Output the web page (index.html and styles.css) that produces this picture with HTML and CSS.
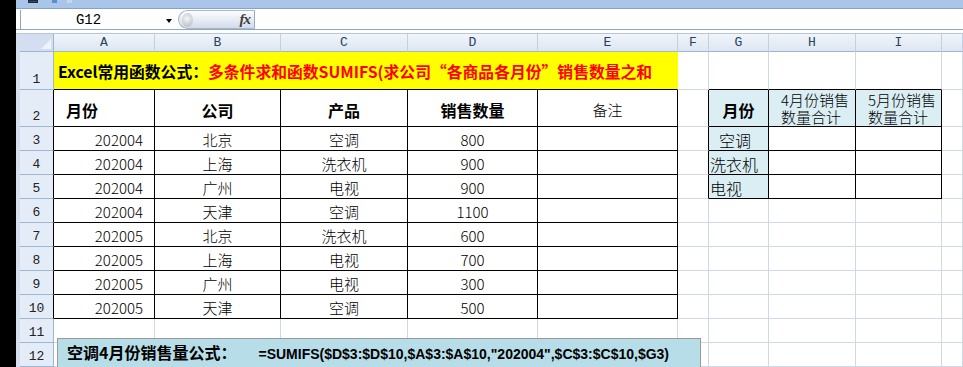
FILE: index.html
```html
<!DOCTYPE html>
<html lang="zh-CN">
<head>
    <meta charset="UTF-8">
    <title>SUMIFS</title>
    <link rel="stylesheet" href="styles.css">
</head>
<body>
    <div class="window">
        <div class="edge"></div>
        <div class="app">
            <div class="qat">
                <span class="qat-icon save"></span>
                <span class="qat-icon undo"></span>
                <span class="qat-icon redo"></span>
            </div>
            <div class="fbar">
                <div class="namebox">
                    <span class="name">G12</span>
                    <span class="arrow"></span>
                </div>
                <div class="fx-btn">
                    <span class="ball"></span>
                    <span class="fx">fx</span>
                </div>
                <div class="finput"></div>
            </div>
            <div class="band"></div>

            <div class="sheet">
                <!-- 列标 -->
                <div class="corner"><span class="tri"></span></div>
                <div class="ch">A</div>
                <div class="ch">B</div>
                <div class="ch">C</div>
                <div class="ch">D</div>
                <div class="ch">E</div>
                <div class="ch">F</div>
                <div class="ch">G</div>
                <div class="ch">H</div>
                <div class="ch">I</div>
                <div class="ch"></div>

                <!-- 1 -->
                <div class="rh">1</div>
                <div class="c title"><b>Excel常用函数公式：</b><b class="red">多条件求和函数SUMIFS(求公司“各商品各月份”销售数量之和</b></div>
                <div class="c"></div>
                <div class="c bb"></div>
                <div class="c bb"></div>
                <div class="c bb"></div>
                <div class="c"></div>

                <!-- 2 -->
                <div class="rh dark">2</div>
                <div class="c b head left">月份</div>
                <div class="c b head">公司</div>
                <div class="c b head">产品</div>
                <div class="c b head">销售数量</div>
                <div class="c b note">备注</div>
                <div class="c br"></div>
                <div class="c b fill head">月份</div>
                <div class="c b fill wrap"><span class="ln">4月份销售</span><span class="ln">数量合计</span></div>
                <div class="c b fill wrap"><span class="ln">5月份销售</span><span class="ln">数量合计</span></div>
                <div class="c"></div>

                <!-- 3 -->
                <div class="rh dark">3</div>
                <div class="c b num">202004</div>
                <div class="c b">北京</div>
                <div class="c b">空调</div>
                <div class="c b">800</div>
                <div class="c b"></div>
                <div class="c br"></div>
                <div class="c b fill item indent">空调</div>
                <div class="c b"></div>
                <div class="c b"></div>
                <div class="c"></div>

                <!-- 4 -->
                <div class="rh dark">4</div>
                <div class="c b num">202004</div>
                <div class="c b">上海</div>
                <div class="c b">洗衣机</div>
                <div class="c b">900</div>
                <div class="c b"></div>
                <div class="c br"></div>
                <div class="c b fill item">洗衣机</div>
                <div class="c b"></div>
                <div class="c b"></div>
                <div class="c"></div>

                <!-- 5 -->
                <div class="rh dark">5</div>
                <div class="c b num">202004</div>
                <div class="c b">广州</div>
                <div class="c b">电视</div>
                <div class="c b">900</div>
                <div class="c b"></div>
                <div class="c br"></div>
                <div class="c b fill item">电视</div>
                <div class="c b"></div>
                <div class="c b"></div>
                <div class="c"></div>

                <!-- 6 -->
                <div class="rh dark">6</div>
                <div class="c b num">202004</div>
                <div class="c b">天津</div>
                <div class="c b">空调</div>
                <div class="c b">1100</div>
                <div class="c b"></div>
                <div class="c"></div>
                <div class="c"></div>
                <div class="c"></div>
                <div class="c"></div>
                <div class="c"></div>

                <!-- 7 -->
                <div class="rh dark">7</div>
                <div class="c b num">202005</div>
                <div class="c b">北京</div>
                <div class="c b">洗衣机</div>
                <div class="c b">600</div>
                <div class="c b"></div>
                <div class="c"></div>
                <div class="c"></div>
                <div class="c"></div>
                <div class="c"></div>
                <div class="c"></div>

                <!-- 8 -->
                <div class="rh dark">8</div>
                <div class="c b num">202005</div>
                <div class="c b">上海</div>
                <div class="c b">电视</div>
                <div class="c b">700</div>
                <div class="c b"></div>
                <div class="c"></div>
                <div class="c"></div>
                <div class="c"></div>
                <div class="c"></div>
                <div class="c"></div>

                <!-- 9 -->
                <div class="rh dark">9</div>
                <div class="c b num">202005</div>
                <div class="c b">广州</div>
                <div class="c b">电视</div>
                <div class="c b">300</div>
                <div class="c b"></div>
                <div class="c"></div>
                <div class="c"></div>
                <div class="c"></div>
                <div class="c"></div>
                <div class="c"></div>

                <!-- 10 -->
                <div class="rh dark">10</div>
                <div class="c b num">202005</div>
                <div class="c b">天津</div>
                <div class="c b">空调</div>
                <div class="c b">500</div>
                <div class="c b"></div>
                <div class="c"></div>
                <div class="c"></div>
                <div class="c"></div>
                <div class="c"></div>
                <div class="c"></div>

                <!-- 11 -->
                <div class="rh">11</div>
                <div class="c"></div>
                <div class="c"></div>
                <div class="c"></div>
                <div class="c"></div>
                <div class="c"></div>
                <div class="c"></div>
                <div class="c"></div>
                <div class="c"></div>
                <div class="c"></div>
                <div class="c"></div>

                <!-- 12 -->
                <div class="rh">12</div>
                <div class="c"></div>
                <div class="c"></div>
                <div class="c"></div>
                <div class="c"></div>
                <div class="c"></div>
                <div class="c"></div>
                <div class="c"></div>
                <div class="c"></div>
                <div class="c"></div>
                <div class="c"></div>

                <!-- 文本框 -->
                <div class="textbox">
                    <span class="tb-label">空调4月份销售量公式：</span><span class="tb-formula">=SUMIFS($D$3:$D$10,$A$3:$A$10,"202004",$C$3:$C$10,$G3)</span>
                </div>
            </div>
        </div>
    </div>
</body>
</html>
```

FILE: styles.css
```css
* {
    margin: 0;
    padding: 0;
    box-sizing: border-box;
}
html, body {
    width: 963px;
    height: 367px;
    overflow: hidden;
    background: #000;
}
body {
    font-family: "Noto Sans CJK SC", sans-serif;
}
.window {
    display: flex;
    height: 367px;
}
.edge {
    width: 16px;
    background: #000;
    flex-shrink: 0;
}
.app {
    flex: 1;
    background: #d5dfed;
    display: flex;
    flex-direction: column;
    overflow: hidden;
}

/* quick access strip */
.qat {
    height: 9px;
    background: #aac5ea;
    border-bottom: 1px solid #86a2c6;
    display: flex;
    gap: 10px;
    padding-left: 12px;
}
.qat-icon {
    width: 10px;
    height: 3px;
}
.qat-icon.save {
    background: #3b4d66;
    border: 1px solid #1e2a3a;
}
.qat-icon.undo {
    background: #5a8fd0;
    width: 5px;
    margin-left: 4px;
}
.qat-icon.redo {
    background: #c9d6e8;
    width: 5px;
}

/* formula bar */
.fbar {
    height: 21px;
    background: #fff;
    border-bottom: 1px solid #8ea6c6;
    padding: 1px 0 0 4px;
    display: flex;
}
.namebox {
    width: 158px;
    height: 19px;
    border-left: 1px solid #8ea6c6;
    display: flex;
    align-items: center;
    position: relative;
}
.name {
    flex: 1;
    text-align: center;
    padding-right: 22px;
    font-family: "Liberation Mono", monospace;
    font-size: 14px;
    color: #000;
}
.arrow {
    position: absolute;
    right: 6px;
    top: 9px;
    border-left: 3.5px solid transparent;
    border-right: 3.5px solid transparent;
    border-top: 4px solid #000;
}
.fx-btn {
    width: 77px;
    height: 19px;
    border: 1px solid #a7b6cb;
    border-right-color: #9aaac2;
    border-radius: 10px 0 0 10px;
    background: linear-gradient(#fbfcfe, #e6ebf3 55%, #d3dbe7);
    display: flex;
    align-items: center;
    justify-content: space-between;
    padding: 0 4px 0 3px;
}
.ball {
    width: 11px;
    height: 14px;
    border-radius: 50%;
    background: radial-gradient(circle at 45% 40%, #f4f5f7, #c2c7cf 70%, #a9b0bb);
}
.fx {
    font-family: "Liberation Serif", serif;
    font-style: italic;
    font-size: 15px;
    font-weight: bold;
    color: #3d3d3d;
    letter-spacing: -1px;
    line-height: 1;
}
.finput {
    flex: 1;
}
.band {
    height: 4px;
    background: #fff;
    border-bottom: 1px solid #b6c7dd;
}

/* sheet grid */
.sheet {
    position: relative;
    flex: 1;
    margin-left: 4px;
    background: #fff;
    display: grid;
    grid-template-columns: 34px 101px 126px 127px 130px 140px 31px 60px 87px 86px 1fr;
    grid-template-rows: 18px 38px 37px repeat(9, 24px) 1fr;
}
.corner {
    background: #d3dff0;
    border-right: 1px solid #9eb6ce;
    border-bottom: 1px solid #9eb6ce;
    position: relative;
}
.tri {
    position: absolute;
    right: 2px;
    bottom: 2px;
    border-left: 10px solid transparent;
    border-bottom: 10px solid #f0f4fa;
}
.ch {
    background: linear-gradient(#f1f5fb, #dde6f1);
    border-right: 1px solid #c2d0e2;
    border-bottom: 1px solid #9eb6ce;
    font-family: "Liberation Mono", monospace;
    font-size: 13px;
    color: #27415f;
    text-align: center;
    line-height: 17px;
}
.rh {
    background: #e4ecf7;
    border-right: 1px solid #9eb6ce;
    border-bottom: 1px solid #9eb6ce;
    font-family: "Liberation Mono", monospace;
    font-size: 13px;
    color: #222;
    display: flex;
    align-items: flex-end;
    justify-content: center;
    padding-bottom: 2px;
}
.rh.dark {
    border-right-color: #000;
}
.c {
    border-right: 1px solid #d0d7e5;
    border-bottom: 1px solid #d0d7e5;
    font-size: 15px;
    font-weight: 300;
    color: #000;
    display: flex;
    align-items: center;
    justify-content: center;
    padding-top: 2px;
    line-height: 1;
    white-space: nowrap;
}
.c.b {
    border-right-color: #000;
    border-bottom-color: #000;
}
.c.br {
    border-right-color: #000;
}
.c.bb {
    border-bottom-color: #000;
}
.c.fill {
    background: #daeef3;
}
.title {
    grid-column: span 5;
    background: #ffff00;
    border-right-color: #ffff00;
    border-bottom-color: #000;
    justify-content: flex-start;
    padding: 2px 0 0 4px;
    font-size: 15.8px;
}
.title b {
    font-weight: bold;
}
.title .red {
    color: #ff0000;
}
.head {
    font-size: 16px;
    font-weight: bold;
    padding-top: 4px;
}
.head.left {
    justify-content: flex-start;
    padding-left: 12px;
}
.note {
    padding-top: 3px;
}
.num {
    justify-content: flex-end;
    padding-right: 11px;
}
.wrap {
    flex-direction: column;
    align-items: flex-start;
    justify-content: flex-start;
    padding: 2px 0 0 12px;
}
.wrap .ln {
    display: block;
    height: 18px;
    line-height: 16px;
}
.item {
    justify-content: flex-start;
    padding-left: 1px;
    font-size: 16px;
}
.item.indent {
    padding-left: 10px;
}

/* 公式说明文本框 */
.textbox {
    position: absolute;
    left: 37px;
    top: 304px;
    width: 644px;
    height: 44px;
    background: #b7dee8;
    border: 1px solid #9a9a9a;
    padding: 3px 0 0 9px;
    font-weight: bold;
    line-height: 20px;
    color: #000;
    white-space: nowrap;
}
.tb-label {
    font-size: 16px;
}
.tb-formula {
    margin-left: 22px;
    font-family: "Liberation Sans", sans-serif;
    font-size: 14px;
}
```
